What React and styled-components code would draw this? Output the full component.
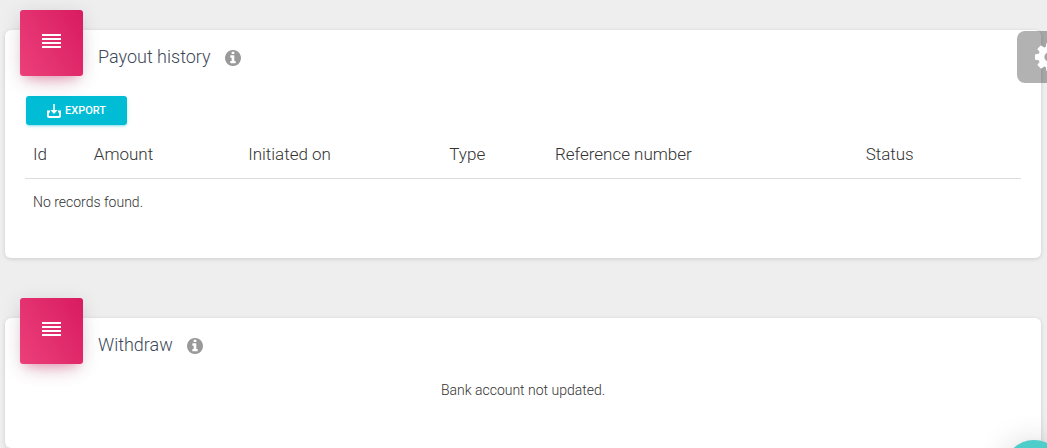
import React from "react";
import styled, { createGlobalStyle } from "styled-components";

const GlobalStyle = createGlobalStyle`
  *, *::before, *::after { box-sizing: border-box; }
  html, body { margin: 0; overflow: hidden; }
  body {
    background: #eee;
    color: #333;
    font: 300 14px/20px Roboto, "Liberation Sans", sans-serif;
  }
`;

const Page = styled.main`
  display: flex;
  flex-direction: column;
  gap: 60px;
  padding: 30px 6px 0 5px;
`;

const Card = styled.section`
  background: #fff;
  border-radius: 6px;
  box-shadow: 0 1px 4px rgba(0, 0, 0, 0.14);
`;

const CardHeader = styled.header`
  display: flex;
  align-items: flex-start;
  padding: 0 15px;
`;

const HeaderIcon = styled.div`
  display: grid;
  place-items: center;
  width: 63px;
  height: 66px;
  margin: -20px 15px 0 0;
  padding-bottom: 4px;
  border-radius: 3px;
  background: linear-gradient(60deg, #ec407a, #d81b60);
  box-shadow: 0 12px 20px -10px rgba(233, 30, 99, 0.28),
    0 4px 20px rgba(0, 0, 0, 0.12), 0 7px 8px -5px rgba(233, 30, 99, 0.2);
`;

const CardTitle = styled.h2`
  display: flex;
  align-items: center;
  gap: 14px;
  margin: 15px 0 0;
  color: #3c4858;
  font-size: 18px;
  line-height: 24px;
  font-weight: 300;
`;

const InfoSvg = styled.svg`
  width: 16px;
  height: 16px;
  margin-top: 2px;
  fill: #999;
`;

const CardBody = styled.div`
  padding: ${(p) => (p.$compact ? "16px 20px 48px" : "20px 20px 46px")};
`;

const ExportButton = styled.button`
  display: flex;
  align-items: center;
  justify-content: center;
  gap: 4px;
  width: 101px;
  height: 29px;
  margin: 0 0 0 1px;
  padding: 0;
  border: 0;
  border-radius: 3px;
  background: #00bcd4;
  box-shadow: 0 2px 2px rgba(0, 188, 212, 0.14),
    0 3px 1px -2px rgba(0, 188, 212, 0.2), 0 1px 5px rgba(0, 188, 212, 0.12);
  color: #fff;
  font: 500 11px/16px Roboto, "Liberation Sans", sans-serif;
  text-transform: uppercase;
  cursor: pointer;
`;

const Table = styled.table`
  width: 100%;
  margin-top: 5px;
  border-collapse: collapse;
  table-layout: fixed;
`;

const Col = styled.col`
  width: ${(p) => p.$share};
`;

const Th = styled.th`
  padding: 12px 8px;
  border-bottom: 1px solid #ddd;
  font-size: 17px;
  line-height: 24px;
  font-weight: 300;
  text-align: left;
`;

const Td = styled.td`
  padding: 13px 8px 0;
`;

const Notice = styled.p`
  margin: 0;
  text-align: center;
`;

const SettingsButton = styled.button`
  position: fixed;
  top: 31px;
  right: -34px;
  display: grid;
  place-items: center;
  width: 64px;
  height: 52px;
  padding: 0;
  border: 0;
  border-radius: 8px 0 0 8px;
  background: rgba(0, 0, 0, 0.3);
  color: #fff;
  cursor: pointer;
`;

const ChatButton = styled.button`
  position: fixed;
  right: -17px;
  bottom: -52px;
  width: 60px;
  height: 60px;
  padding: 0;
  border: 0;
  border-radius: 50%;
  background: #4ecdcb;
  box-shadow: 0 1px 6px rgba(0, 0, 0, 0.06), 0 2px 32px rgba(0, 0, 0, 0.16);
  cursor: pointer;
`;

const JustifyIcon = () => (
  <svg width="19" height="14" viewBox="0 0 19 14" fill="#fff" aria-hidden="true">
    <path d="M0 0h19v2H0zM0 4h19v2H0zM0 8h19v2H0zM0 12h19v2H0z" />
  </svg>
);

const DownloadIcon = () => (
  <svg width="14" height="14" viewBox="0 0 14 14" fill="none" aria-hidden="true">
    <path d="M3 7.5H1V12q0 1 1 1h10q1 0 1-1V7.5h-2" stroke="#fff" strokeWidth="2" />
    <path d="M7 0v7" stroke="#fff" strokeWidth="1.6" />
    <path d="M3.4 6h7.2L7 10z" fill="#fff" />
  </svg>
);

const InfoIcon = () => (
  <InfoSvg viewBox="0 128 1536 1536" aria-hidden="true">
    <path d="M1024 1376v-160q0-14-9-23t-23-9h-96v-512q0-14-9-23t-23-9h-320q-14 0-23 9t-9 23v160q0 14 9 23t23 9h96v320h-96q-14 0-23 9t-9 23v160q0 14 9 23t23 9h448q14 0 23-9t9-23zm-128-896v-160q0-14-9-23t-23-9h-192q-14 0-23 9t-9 23v160q0 14 9 23t23 9h192q14 0 23-9t9-23zm640 416q0 209-103 385.5t-279.5 279.5-385.5 103-385.5-103-279.5-279.5-103-385.5 103-385.5 279.5-279.5 385.5-103 385.5 103 279.5 279.5 103 385.5z" />
  </InfoSvg>
);

const CogIcon = () => (
  <svg width="28" height="28" viewBox="0 128 1536 1536" fill="currentColor" aria-hidden="true">
    <path d="M1024 896q0-106-75-181t-181-75-181 75-75 181 75 181 181 75 181-75 75-181zm512-109v222q0 12-8 23t-20 13l-185 28q-19 54-39 91 35 50 107 138 10 12 10 25t-9 23q-27 37-99 108t-94 71q-12 0-26-9l-138-108q-44 23-91 38-16 136-29 186-7 28-36 28h-222q-14 0-24.5-8.5t-11.5-21.5l-28-184q-49-16-90-37l-141 107q-10 9-25 9-14 0-25-11-126-114-165-168-7-10-7-23 0-12 8-23 15-21 51-66.5t54-70.5q-27-50-41-99l-183-27q-13-2-21-12.5t-8-23.5v-222q0-12 8-23t19-13l186-28q14-46 39-92-40-57-107-138-10-12-10-24 0-10 9-23 26-36 98.5-107.5t94.5-71.5q13 0 26 10l138 107q44-23 91-38 16-136 29-186 7-28 36-28h222q14 0 24.5 8.5t11.5 21.5l28 184q49 16 90 37l142-107q9-9 24-9 13 0 25 10 129 119 165 170 7 8 7 22 0 12-8 23-15 21-51 66.5t-54 70.5q26 50 41 98l183 28q13 2 21 12.5t8 23.5z" />
  </svg>
);

const columns = [
  ["Id", "6.1%"],
  ["Amount", "15.5%"],
  ["Initiated on", "20.2%"],
  ["Type", "10.6%"],
  ["Reference number", "31.2%"],
  ["Status", "16.4%"],
];

function Panel({ title, compact, children }) {
  return (
    <Card>
      <CardHeader>
        <HeaderIcon>
          <JustifyIcon />
        </HeaderIcon>
        <CardTitle>
          {title}
          <InfoIcon />
        </CardTitle>
      </CardHeader>
      <CardBody $compact={compact}>{children}</CardBody>
    </Card>
  );
}

export default function App() {
  return (
    <>
      <GlobalStyle />
      <Page>
        <Panel title="Payout history">
          <ExportButton type="button">
            <DownloadIcon />
            Export
          </ExportButton>
          <Table>
            <colgroup>
              {columns.map(([name, share]) => (
                <Col key={name} $share={share} />
              ))}
            </colgroup>
            <thead>
              <tr>
                {columns.map(([name]) => (
                  <Th key={name} scope="col">{name}</Th>
                ))}
              </tr>
            </thead>
            <tbody>
              <tr>
                <Td colSpan={columns.length}>No records found.</Td>
              </tr>
            </tbody>
          </Table>
        </Panel>
        <Panel title="Withdraw" compact>
          <Notice>Bank account not updated.</Notice>
        </Panel>
      </Page>
      <SettingsButton type="button" aria-label="Settings">
        <CogIcon />
      </SettingsButton>
      <ChatButton type="button" aria-label="Chat" />
    </>
  );
}
